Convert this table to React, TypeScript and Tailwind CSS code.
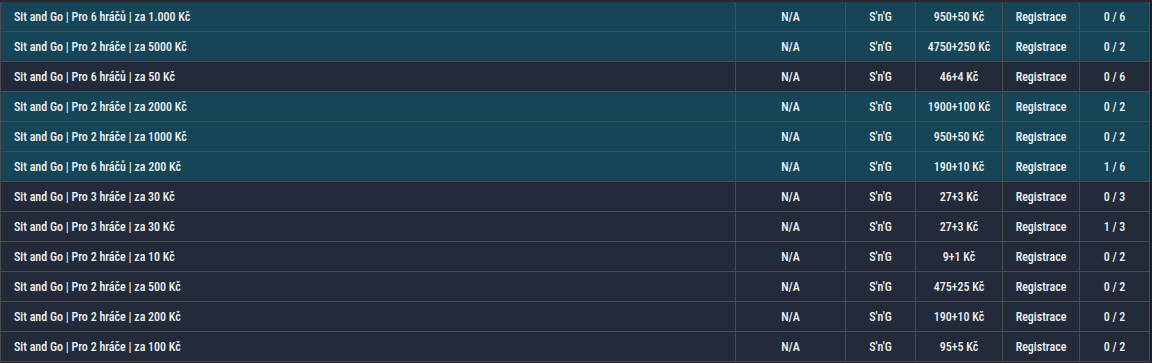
const rows = [
  { name: 'Sit and Go | Pro 6 hráčů | za 1.000 Kč', buyIn: '950+50 Kč', players: '0 / 6', hi: true },
  { name: 'Sit and Go | Pro 2 hráče | za 5000 Kč', buyIn: '4750+250 Kč', players: '0 / 2', hi: true },
  { name: 'Sit and Go | Pro 6 hráčů | za 50 Kč', buyIn: '46+4 Kč', players: '0 / 6', hi: false },
  { name: 'Sit and Go | Pro 2 hráče | za 2000 Kč', buyIn: '1900+100 Kč', players: '0 / 2', hi: true },
  { name: 'Sit and Go | Pro 2 hráče | za 1000 Kč', buyIn: '950+50 Kč', players: '0 / 2', hi: true },
  { name: 'Sit and Go | Pro 6 hráčů | za 200 Kč', buyIn: '190+10 Kč', players: '1 / 6', hi: true },
  { name: 'Sit and Go | Pro 3 hráče | za 30 Kč', buyIn: '27+3 Kč', players: '0 / 3', hi: false },
  { name: 'Sit and Go | Pro 3 hráče | za 30 Kč', buyIn: '27+3 Kč', players: '1 / 3', hi: false },
  { name: 'Sit and Go | Pro 2 hráče | za 10 Kč', buyIn: '9+1 Kč', players: '0 / 2', hi: false },
  { name: 'Sit and Go | Pro 2 hráče | za 500 Kč', buyIn: '475+25 Kč', players: '0 / 2', hi: false },
  { name: 'Sit and Go | Pro 2 hráče | za 200 Kč', buyIn: '190+10 Kč', players: '0 / 2', hi: false },
  { name: 'Sit and Go | Pro 2 hráče | za 100 Kč', buyIn: '95+5 Kč', players: '0 / 2', hi: false },
];

const App = () => {
  return (
    <div
      className="w-[1152px] h-[363px] bg-[#1f2023] overflow-hidden text-[12px] font-medium text-[#f1f3f5]"
      style={{ fontFamily: '"Roboto Condensed", Roboto, "Liberation Sans", sans-serif' }}
    >
      <div className="w-[1150px] border-t-2 border-[#2a2b2e]">
        {rows.map((row, i) => (
          <div
            key={i}
            className={`grid grid-cols-[735px_110px_70px_87px_77px_70px_1px] h-[30px] border-b border-[#4a4b4e] ${
              row.hi ? 'bg-[#164557]' : 'bg-[#232b3a]'
            }`}
          >
            {/* Tournament name */}
            <div className="flex items-center pl-[13px] border-l border-[#4a4b4e]">{row.name}</div>
            <div className="flex items-center justify-center border-l border-[#4a4b4e]">N/A</div>
            <div className="flex items-center justify-center border-l border-[#4a4b4e]">S'n'G</div>
            <div className="flex items-center justify-center border-l border-[#4a4b4e]">{row.buyIn}</div>
            <div className="flex items-center justify-center border-l border-[#4a4b4e]">Registrace</div>
            <div className="flex items-center justify-center border-l border-[#4a4b4e]">{row.players}</div>
            <div className="bg-[#4a4b4e]" />
          </div>
        ))}
      </div>
    </div>
  );
};

export default App;
